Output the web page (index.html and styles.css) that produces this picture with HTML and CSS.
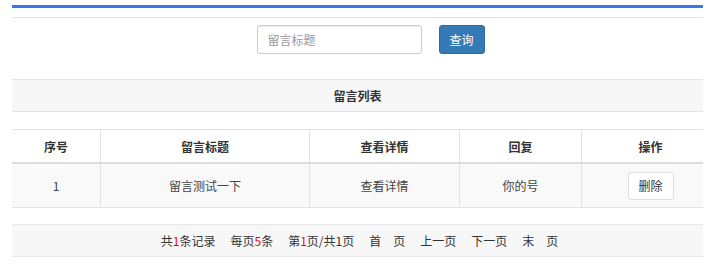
FILE: index.html
```html
<!DOCTYPE html>
<html lang="zh-CN">
<head>
    <meta charset="UTF-8">
    <meta name="viewport" content="width=device-width, initial-scale=1.0">
    <title>留言列表</title>
    <link rel="stylesheet" href="styles.css">
</head>
<body>

    <div class="page">
        <div class="top-bar"></div>
        <div class="divider"></div>

        <!-- Search -->
        <div class="search-row">
            <input type="text" class="search-input" placeholder="留言标题">
            <button class="btn-primary">查询</button>
        </div>

        <!-- List -->
        <div class="panel-title">留言列表</div>

        <table class="msg-table">
            <thead>
                <tr>
                    <th class="col-no">序号</th>
                    <th class="col-title">留言标题</th>
                    <th class="col-detail">查看详情</th>
                    <th class="col-reply">回复</th>
                    <th class="col-op">操作</th>
                </tr>
            </thead>
            <tbody>
                <tr>
                    <td>1</td>
                    <td>留言测试一下</td>
                    <td>查看详情</td>
                    <td>你的号</td>
                    <td class="col-op"><button class="btn-default">删除</button></td>
                </tr>
            </tbody>
        </table>

        <!-- Pager -->
        <div class="pager">
            <span>共<em>1</em>条记录</span>
            <span>每页<em>5</em>条</span>
            <span>第<em>1</em>页/共1页</span>
            <span>首　页</span>
            <span>上一页</span>
            <span>下一页</span>
            <span>末　页</span>
        </div>
    </div>

</body>
</html>
```

FILE: styles.css
```css
body {
    margin: 0;
    font-family: "Noto Sans CJK SC", "Liberation Sans", sans-serif;
    font-size: 12px;
    color: #333;
    background-color: #fff;
}
.page {
    margin: 5px 9px 0 12px;
}
.top-bar {
    height: 3px;
    background-color: #3579e6;
}
.divider {
    margin-top: 9px;
    border-top: 1px solid #e3e3e3;
}
.search-row {
    display: flex;
    justify-content: center;
    gap: 17px;
    margin-top: 7px;
    padding-left: 26px;
}
.search-input {
    width: 165px;
    height: 29px;
    box-sizing: border-box;
    padding: 0 10px;
    border: 1px solid #ccc;
    border-radius: 3px;
    font-family: inherit;
    font-size: 12px;
    color: #555;
    box-shadow: inset 0 1px 1px rgba(0, 0, 0, 0.075);
}
.search-input::placeholder {
    color: #999;
}
.btn-primary {
    width: 46px;
    height: 29px;
    border: 1px solid #2e6da4;
    border-radius: 3px;
    background-color: #337ab7;
    color: #fff;
    font-family: inherit;
    font-size: 12px;
    padding: 0;
}
.panel-title {
    margin-top: 25px;
    height: 31px;
    line-height: 31px;
    text-align: center;
    font-weight: bold;
    background-color: #f7f7f7;
    border-top: 1px solid #e3e3e3;
    border-bottom: 1px solid #e3e3e3;
}
.msg-table {
    width: 100%;
    margin-top: 17px;
    border-collapse: collapse;
    table-layout: fixed;
}
.msg-table th, .msg-table td {
    text-align: center;
    padding: 0;
    border-left: 1px solid #e3e3e3;
}
.msg-table th:first-child, .msg-table td:first-child {
    border-left: none;
}
.msg-table th {
    height: 32px;
    font-weight: bold;
    border-top: 1px solid #e3e3e3;
    border-bottom: 2px solid #ddd;
}
.msg-table td {
    height: 43px;
    color: #444;
    background-color: #f9f9f9;
    border-bottom: 1px solid #e3e3e3;
}
.col-no { width: 88px; }
.col-title { width: 208px; }
.col-detail { width: 149px; }
.col-reply { width: 121px; }
.msg-table .col-op {
    padding-left: 16px;
}
.btn-default {
    width: 46px;
    height: 28px;
    padding: 0;
    border: 1px solid #ddd;
    border-radius: 3px;
    background-color: #fff;
    color: #333;
    font-family: inherit;
    font-size: 12px;
}
.pager {
    display: flex;
    justify-content: center;
    gap: 15px;
    margin-top: 16px;
    padding-left: 4px;
    height: 31px;
    line-height: 31px;
    background-color: #f7f7f7;
    border-top: 1px solid #e8e8e8;
    border-bottom: 1px solid #e8e8e8;
}
.pager em {
    font-style: normal;
    color: #f00;
}
```
